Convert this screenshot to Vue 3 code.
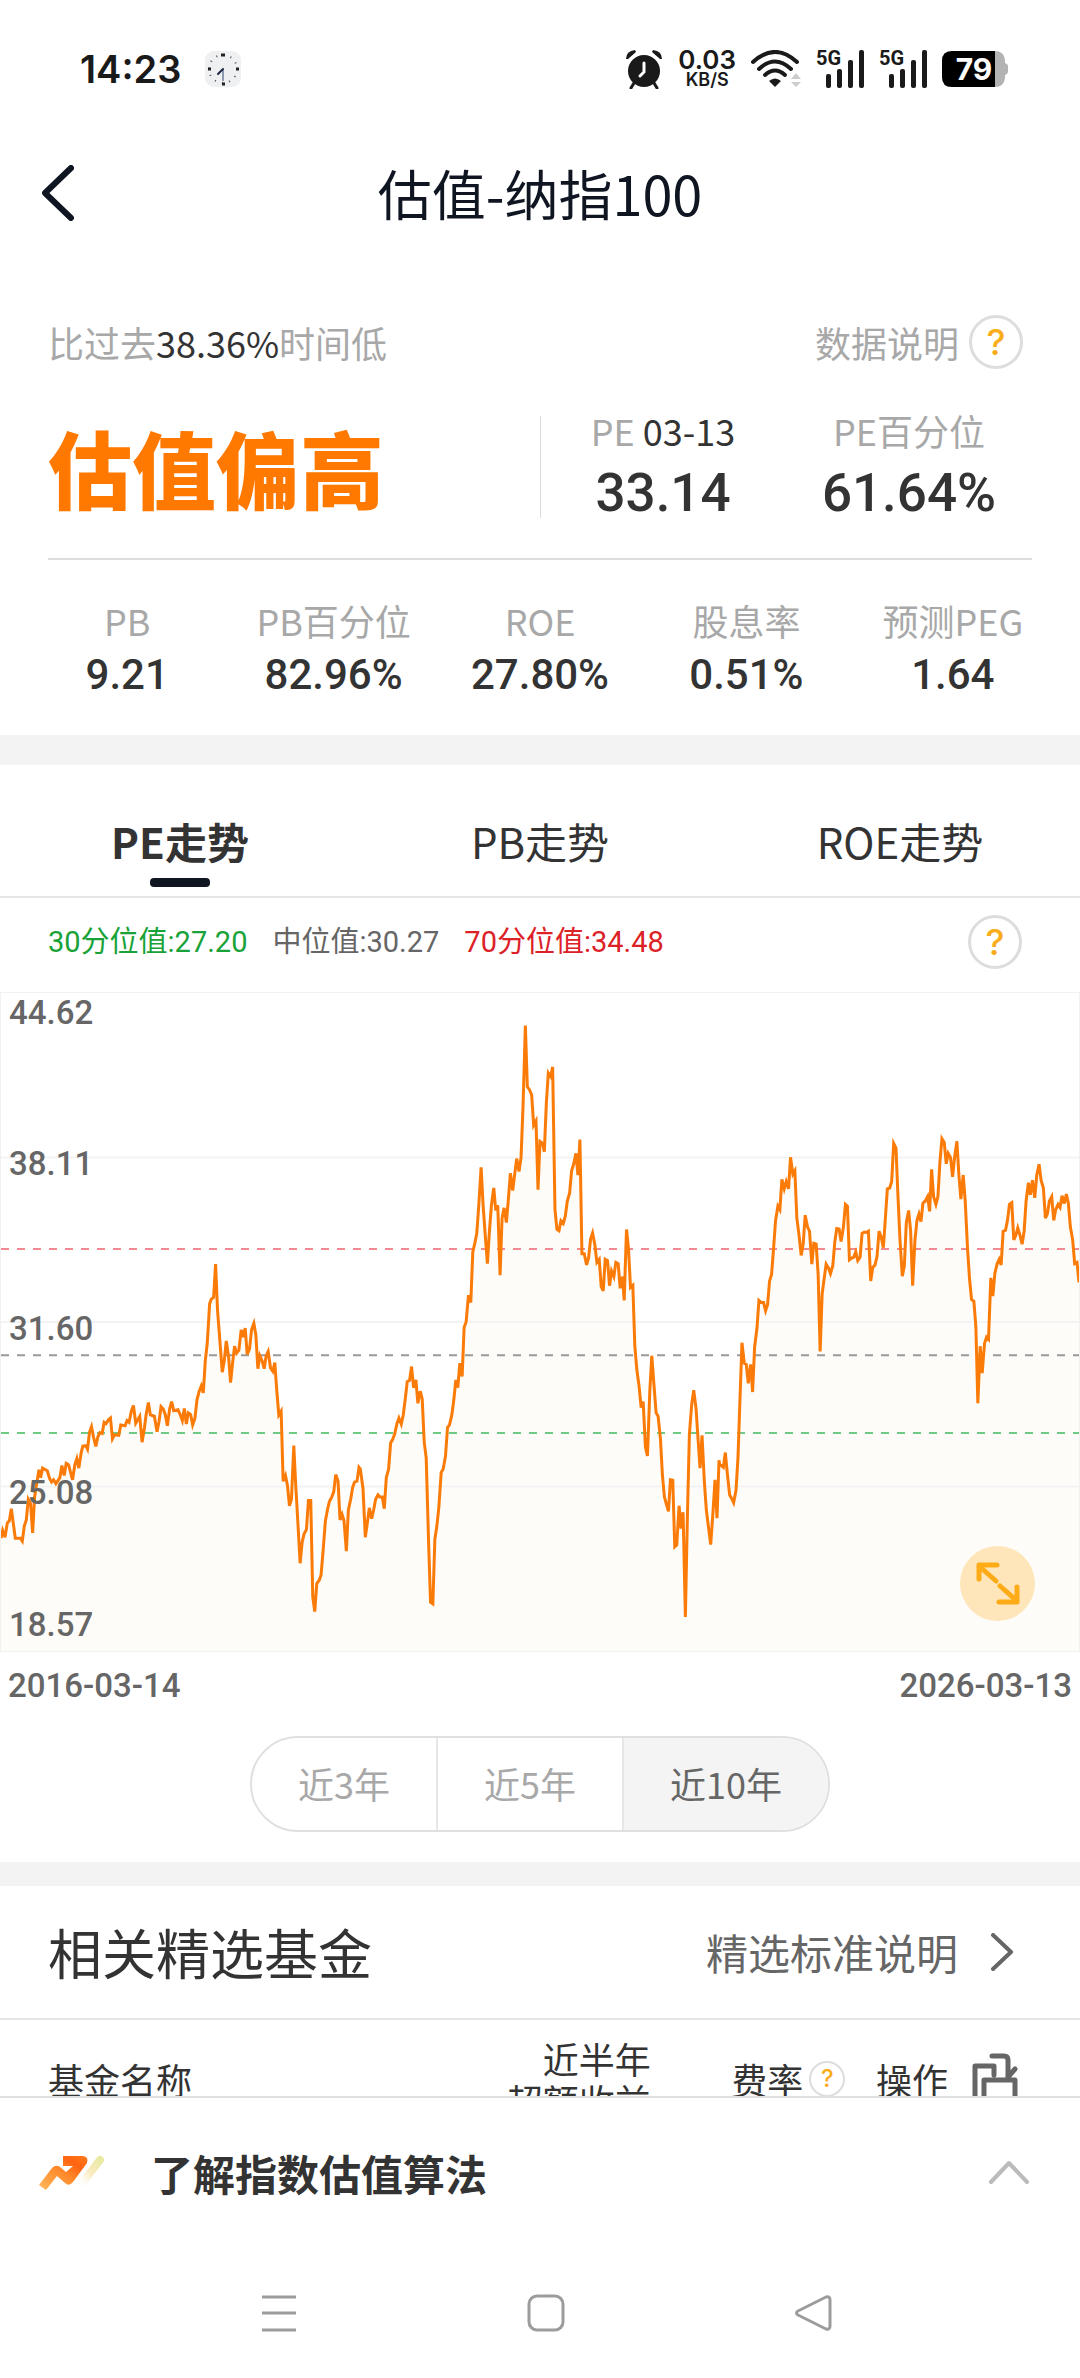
<script setup>
import { computed, ref } from 'vue'

const metrics = [
  { label: 'PB', value: '9.21' },
  { label: 'PB百分位', value: '82.96%' },
  { label: 'ROE', value: '27.80%' },
  { label: '股息率', value: '0.51%' },
  { label: '预测PEG', value: '1.64' }
]
const tabs = ['PE走势', 'PB走势', 'ROE走势']
const ranges = ['近3年', '近5年', '近10年']
const activeTab = ref('PE走势')
const activeRange = ref('近10年')

const axisMax = 44.62
const axisMin = 18.57
const gridLines = [0.25, 0.5, 0.75]
const axisLabels = [
  { text: '44.62', top: 3 },
  { text: '38.11', top: 26 },
  { text: '31.60', top: 51 },
  { text: '25.08', top: 76 },
  { text: '18.57', top: 96 }
]
const percentiles = [
  { name: '30分位值', value: '27.20', type: 'low' },
  { name: '中位值', value: '30.27', type: 'mid' },
  { name: '70分位值', value: '34.48', type: 'high' }
]

// plot area in chart units, the curve is kept in three blocks of equal width
const plot = { width: 3240, height: 1522, top: 29 }
const blocks = [
  '0,1290 5,1272 12,1288 19,1255 25,1250 31,1222 43,1290 58,1290 64,1297 70,1262 76,1248 82,1200 89,1210 95,1278 101,1195 108,1160 114,1132 119,1150 125,1128 139,1134 146,1152 152,1160 158,1155 165,1164 177,1150 183,1122 190,1145 196,1117 203,1120 215,1155 222,1120 228,1106 234,1128 241,1092 246,1077 255,1076 260,1084 266,1045 272,1032 278,1056 285,1078 291,1056 297,1046 304,1048 310,1022 316,1025 323,1016 329,1012 335,1060 341,1051 354,1052 360,1028 373,1030 379,1018 385,1022 392,995 398,983 405,1024 417,1008 424,1068 431,1035 436,1005 443,976 449,1005 461,1008 469,1044 475,1020 481,986 488,992 494,1005 500,1030 507,990 513,974 519,995 532,993 538,1003 545,1018 551,990 557,1026 563,1000 570,1004 576,1028 583,1012 589,970 595,952 602,938 608,954 614,880 620,838 627,748 632,737 639,733 645,656 651,765 658,835 665,906 671,880 677,834 684,870 690,930 696,885 702,846 708,862 715,855 722,808 728,825 734,804 740,865 747,852 753,808 760,793 766,820 772,898 778,868 785,880 791,898 797,868 803,858 810,896 817,904 823,884 829,950 835,1005 842,996 848,1158 855,1145 861,1168 867,1215 873,1200 880,1076 886,1170 892,1250 899,1348 905,1300 911,1280 918,1270 924,1203 931,1203 937,1425 943,1460 949,1395 956,1388 962,1375 968,1320 975,1250 981,1225 987,1205 994,1195 1000,1183 1006,1143 1013,1158 1019,1248 1025,1235 1031,1250 1038,1320 1044,1225 1051,1200 1057,1172 1063,1160 1070,1158 1076,1126',
  '0,1130 8,1175 15,1288 21,1255 27,1220 34,1245 40,1225 46,1200 53,1190 59,1195 66,1195 72,1222 78,1150 85,1130 91,1070 97,1062 103,1050 110,1025 116,1012 123,1026 129,1005 135,968 141,928 148,925 154,893 160,942 167,924 173,978 180,950 186,968 192,1068 198,1105 205,1295 211,1438 218,1442 224,1292 230,1262 236,1218 243,1138 249,1130 256,1100 262,1034 268,1028 275,1005 281,970 287,924 293,942 299,885 306,916 312,802 318,790 325,728 332,745 338,628 344,608 350,585 356,520 363,432 369,520 376,595 382,655 388,580 394,520 401,480 407,532 413,520 420,682 426,550 432,526 439,560 445,505 451,446 458,486 464,448 470,412 477,442 483,410 489,290 496,104 502,246 508,252 515,265 521,335 528,325 534,484 540,372 547,376 553,396 559,285 565,214 572,222 578,200 585,530 591,576 597,579 603,556 610,562 616,545 622,510 629,492 635,440 641,425 648,400 654,450 660,368 666,632 673,632 680,658 686,642 692,598 698,584 705,612 711,652 718,645 724,708 730,718 736,645 743,648 749,706 755,672 762,685 768,652 775,655 781,712 788,685 793,740 800,576 806,620 812,710 819,705 825,845 831,900 838,940 844,988 850,974 857,1080 863,1100 870,950 876,868 882,930 889,1000 895,1008 902,1060 908,1145 914,1195 920,1212 926,1228 932,1155 939,1156 945,1310 951,1306 958,1215 964,1268 970,1230 977,1472 983,1240 989,1050 996,980 1002,948 1009,990 1015,1060 1021,1128 1027,1052 1034,1160 1040,1225 1047,1268 1053,1305 1059,1240 1066,1155 1072,1244 1078,1110',
  '0,1120 5,1122 11,1126 17,1092 23,1140 30,1190 36,1198 42,1208 49,1180 55,1105 61,970 67,838 74,885 80,888 86,932 93,888 99,952 105,848 112,805 118,740 125,745 132,745 138,764 144,750 150,695 156,680 162,620 168,555 175,522 181,530 187,460 194,482 200,465 207,482 213,409 220,448 226,440 232,550 239,592 245,636 251,610 257,543 264,570 270,580 277,656 283,608 290,610 296,680 302,858 308,725 314,690 320,656 327,665 333,678 340,660 346,605 352,574 359,575 365,604 372,570 378,518 384,522 390,646 397,642 403,640 409,628 415,648 422,640 428,585 435,582 441,583 447,580 454,695 460,664 467,658 473,638 479,580 486,595 492,618 498,550 504,482 511,480 517,465 523,377 530,388 536,500 542,600 549,684 555,660 561,560 568,532 574,580 580,706 587,600 593,555 599,540 605,558 611,515 618,510 625,500 631,534 637,437 643,500 650,518 656,500 662,420 668,366 675,375 681,424 687,400 694,410 700,454 706,410 713,372 719,450 725,506 732,450 738,510 745,620 751,690 757,738 764,742 770,800 776,978 783,846 789,908 796,840 802,825 808,830 815,688 821,730 827,678 834,655 840,645 846,658 852,580 859,578 865,555 871,518 878,514 884,600 890,590 896,572 903,590 909,610 915,580 921,510 928,468 934,496 940,462 947,503 953,450 960,425 966,462 973,480 979,550 985,540 991,510 998,500 1004,555 1010,530 1017,518 1023,525 1029,498 1036,516 1042,494 1048,515 1054,570 1061,600 1067,655 1074,652 1080,698'
]

const curve = computed(() =>
  blocks
    .flatMap((block, index) =>
      block.split(' ').map((pair) => {
        const [x, y] = pair.split(',').map(Number)
        return `${x + index * 1080},${y - plot.top}`
      })
    )
    .join(' ')
)
const area = computed(() => `0,${plot.height} ${curve.value} ${plot.width},${plot.height}`)

function valueToY(value) {
  return Math.round(((axisMax - value) / (axisMax - axisMin)) * plot.height)
}
</script>

<template>
  <div class="page">
    <div class="status">
      <div class="status-side">
        <span class="time">14:23</span>
        <svg class="clock-app" viewBox="0 0 36 36" aria-hidden="true">
          <rect width="36" height="36" rx="9" fill="#eff0f2" />
          <circle
            cx="18"
            cy="18"
            r="14"
            fill="none"
            stroke="#555"
            stroke-width="2"
            stroke-dasharray="1 6.33"
          />
          <path d="M16 4h4M3 18h3M31 18h3M17 33h3" stroke="#222" stroke-width="3" />
          <path d="M18 18v12" stroke="#8d9bb0" stroke-width="2" />
          <path d="M18 18l-5 5" stroke="#1c2740" stroke-width="2" stroke-linecap="round" />
        </svg>
      </div>
      <div class="status-side status-right">
        <svg class="alarm" viewBox="0 0 38 40" aria-hidden="true">
          <path d="M1 10Q1 2 10 1l1 2L3 10zM37 10Q37 2 28 1l-1 2 8 7z" fill="#1a1a1a" />
          <circle cx="19" cy="22" r="16" fill="#1a1a1a" />
          <path d="M9 34l-3 5M29 34l3 5" stroke="#1a1a1a" stroke-width="3" stroke-linecap="round" />
          <path
            d="M19 14v9l-4 4"
            fill="none"
            stroke="#fff"
            stroke-width="3"
            stroke-linecap="round"
          />
        </svg>
        <div class="speed">
          <span class="speed-value">0.03</span>
          <span class="speed-unit">KB/S</span>
        </div>
        <svg class="wifi" viewBox="0 0 50 38" aria-hidden="true">
          <g fill="none" stroke="#1a1a1a" stroke-width="4" stroke-linecap="round">
            <path d="M2 12Q24-8 46 12" />
            <path d="M8 19Q24 4 40 19" />
            <path d="M14 25Q24 16 34 25" />
          </g>
          <path d="M24 37l-6-6q6-5 12 0z" fill="#1a1a1a" />
          <path d="M40 29l5-6 5 6zM40 32h10l-5 5z" fill="#ccc" />
        </svg>
        <div v-for="sim in 2" :key="sim" class="signal">
          <span class="signal-type">5G</span>
          <svg viewBox="0 0 48 38" aria-hidden="true">
            <g fill="#1a1a1a">
              <rect x="10" y="24" width="5" height="14" rx="2" />
              <rect x="21" y="19" width="5" height="19" rx="2" />
              <rect x="32" y="10" width="5" height="28" rx="2" />
              <rect x="43" y="0" width="5" height="38" rx="2" />
            </g>
          </svg>
        </div>
        <div class="battery">
          <svg viewBox="0 0 66 36" aria-hidden="true">
            <path
              d="M10 0h43q9 0 10 9v3q3 1 3 3v6q0 2-3 3v3q-1 9-10 9H10Q0 36 0 26V10Q0 0 10 0z"
              fill="#b3b3b3"
            />
            <path d="M10 0h43v36H10Q0 36 0 26V10Q0 0 10 0z" fill="#000" />
          </svg>
          <span class="battery-level">79</span>
        </div>
      </div>
    </div>

    <header class="header">
      <button class="back" type="button" aria-label="返回">
        <svg viewBox="0 0 32 56">
          <path d="M29 3L3 28l26 25" />
        </svg>
      </button>
      <h1>估值-纳指100</h1>
    </header>

    <main class="content">
      <section class="summary">
        <div class="summary-top">
          <p>比过去<b>38.36%</b>时间低</p>
          <div class="explain">
            <span>数据说明</span>
            <button class="help" type="button" aria-label="数据说明">?</button>
          </div>
        </div>
        <div class="summary-main">
          <strong class="verdict">估值偏高</strong>
          <div class="pe-group">
            <div class="pe">
              <span class="label">PE <b>03-13</b></span>
              <span class="pe-value">33.14</span>
            </div>
            <div class="pe">
              <span class="label">PE百分位</span>
              <span class="pe-value">61.64%</span>
            </div>
          </div>
        </div>
        <div class="metrics">
          <div v-for="item in metrics" :key="item.label" class="metric">
            <span class="label">{{ item.label }}</span>
            <span class="metric-value">{{ item.value }}</span>
          </div>
        </div>
      </section>

      <section class="trend">
        <nav class="tabs">
          <button
            v-for="tab in tabs"
            :key="tab"
            type="button"
            :class="{ active: tab === activeTab }"
            @click="activeTab = tab"
          >
            {{ tab }}
          </button>
        </nav>
        <div class="legend">
          <span v-for="item in percentiles" :key="item.name" :class="item.type"
            >{{ item.name }}:{{ item.value }}</span
          >
          <button class="help" type="button" aria-label="分位值说明">?</button>
        </div>
        <div class="chart">
          <svg
            class="plot"
            :viewBox="`0 0 ${plot.width} ${plot.height}`"
            preserveAspectRatio="none"
            aria-hidden="true"
          >
            <polygon class="area" :points="area" />
            <line
              v-for="line in gridLines"
              :key="line"
              class="grid"
              x1="0"
              :x2="plot.width"
              :y1="line * plot.height"
              :y2="line * plot.height"
            />
            <line
              v-for="item in percentiles"
              :key="item.name"
              class="dash"
              :class="item.type"
              x1="0"
              :x2="plot.width"
              :y1="valueToY(item.value)"
              :y2="valueToY(item.value)"
            />
            <polyline class="curve" :points="curve" />
          </svg>
          <span
            v-for="item in axisLabels"
            :key="item.text"
            class="axis-label"
            :style="{ top: item.top + '%' }"
            >{{ item.text }}</span
          >
          <button class="expand" type="button" aria-label="全屏">
            <svg viewBox="0 0 44 44">
              <path d="M20 19L3 4M3 17V3h18M24 24l17 15M41 25v15H23" />
            </svg>
          </button>
        </div>
        <div class="dates">
          <span>2016-03-14</span>
          <span>2026-03-13</span>
        </div>
        <div class="ranges">
          <button
            v-for="range in ranges"
            :key="range"
            type="button"
            :class="{ active: range === activeRange }"
            @click="activeRange = range"
          >
            {{ range }}
          </button>
        </div>
      </section>

      <section class="funds">
        <div class="funds-head">
          <h2>相关精选基金</h2>
          <a href="#"
            >精选标准说明
            <svg viewBox="0 0 24 38" aria-hidden="true">
              <path d="M3 2l18 17L3 36" />
            </svg>
          </a>
        </div>
        <table>
          <thead>
            <tr>
              <th class="col-name">基金名称</th>
              <th class="col-gain">近半年<br />超额收益</th>
              <th class="col-fee">
                <div class="cell">
                  费率<button class="help small" type="button" aria-label="费率说明">?</button>
                </div>
              </th>
              <th class="col-action">
                <div class="cell">
                  操作
                  <svg viewBox="0 0 46 54" aria-hidden="true">
                    <path d="M11 50H3V14h19v9M12 50V28h31v22zM20 4h12q4 0 4 4v16M43 17l-7 8" />
                  </svg>
                </div>
              </th>
            </tr>
          </thead>
        </table>
      </section>
    </main>

    <button class="learn" type="button">
      <svg class="learn-logo" viewBox="0 0 66 36" aria-hidden="true">
        <defs>
          <linearGradient id="arrow" x1="0" y1="1" x2="1" y2="0">
            <stop offset="0" stop-color="#ffb95e" />
            <stop offset="0.5" stop-color="#ff8a2b" />
            <stop offset="0.75" stop-color="#ff6410" />
            <stop offset="1" stop-color="#ff7a1c" />
          </linearGradient>
          <linearGradient id="tail" x1="1" y1="0" x2="0" y2="1">
            <stop offset="0" stop-color="#e9eaa4" />
            <stop offset="0.5" stop-color="#fbecc4" />
            <stop offset="1" stop-color="#fff" stop-opacity="0" />
          </linearGradient>
        </defs>
        <path d="M40 32L61 5" stroke="url(#tail)" stroke-width="8" stroke-linecap="round" />
        <path
          d="M0 30L13 13q4-4 8-1l6 5 7-6H24V1h20q6 1 4 7L34 27q-4 5-8 1l-8-7L7 35z"
          fill="url(#arrow)"
        />
      </svg>
      <span>了解指数估值算法</span>
      <svg class="learn-arrow" viewBox="0 0 42 26" aria-hidden="true">
        <path d="M3 22L21 3l18 19" />
      </svg>
    </button>

    <nav class="system">
      <button type="button" aria-label="最近任务">
        <svg viewBox="0 0 38 38">
          <path d="M2 3h34M2 19h34M2 36h34" />
        </svg>
      </button>
      <button type="button" aria-label="主屏幕">
        <svg viewBox="0 0 38 38">
          <rect x="2" y="2" width="34" height="34" rx="8" />
        </svg>
      </button>
      <button type="button" aria-label="返回">
        <svg viewBox="0 0 38 38">
          <path d="M4 17L32 3q4-1 4 3v26q0 4-4 3L4 21q-3-2 0-4z" />
        </svg>
      </button>
    </nav>
  </div>
</template>

<style>
body {
  margin: 0;
  background: #fff;
}
</style>

<style scoped>
.page {
  display: flex;
  flex-direction: column;
  height: 100vh;
  overflow: hidden;
  color: #333;
  font-family: 'Noto Sans CJK SC', sans-serif;
  font-size: 36px;
  line-height: 44px;
}
button {
  padding: 0;
  border: 0;
  background: none;
  color: inherit;
  font: inherit;
}
h1,
h2,
p {
  margin: 0;
}
svg {
  display: block;
  flex: none;
}
.status {
  display: flex;
  justify-content: space-between;
  align-items: center;
  height: 137px;
  padding: 0 72px 0 80px;
  font-family: Inter, sans-serif;
  color: #1a1a1a;
}
.status-side {
  display: flex;
  align-items: center;
  gap: 24px;
}
.status-right {
  gap: 15px;
}
.time {
  font-size: 38px;
  font-weight: 600;
}
.clock-app {
  width: 36px;
  height: 36px;
}
.alarm {
  width: 38px;
  height: 40px;
}
.speed {
  display: flex;
  flex-direction: column;
  align-items: center;
  font-weight: 600;
}
.speed-value {
  font-size: 26px;
  line-height: 22px;
}
.speed-unit {
  font-size: 18px;
  line-height: 18px;
}
.wifi {
  width: 50px;
  height: 38px;
}
.signal {
  position: relative;
}
.signal svg {
  width: 48px;
  height: 38px;
}
.signal-type {
  position: absolute;
  top: 0;
  left: 0;
  font: 700 20px/16px Roboto, sans-serif;
}
.battery {
  position: relative;
}
.battery svg {
  width: 66px;
  height: 36px;
}
.battery-level {
  position: absolute;
  inset: 0 0 0 -2px;
  color: #fff;
  font-size: 30px;
  font-weight: 700;
  line-height: 36px;
  text-align: center;
}
.header {
  display: grid;
  grid-template-columns: 1fr auto 1fr;
  align-items: center;
  height: 112px;
  padding: 0 42px;
  color: #101522;
}
.header h1 {
  font-size: 54px;
  font-weight: 400;
}
.back {
  justify-self: start;
}
.back svg {
  width: 32px;
  height: 56px;
}
.back path {
  fill: none;
  stroke: #101522;
  stroke-width: 6;
  stroke-linecap: round;
  stroke-linejoin: round;
}
.content {
  flex: 1;
  min-height: 0;
  overflow: hidden;
}
.summary {
  padding-top: 66px;
  border-bottom: 30px solid #f3f3f3;
}
.summary b {
  color: #333;
  font-weight: 400;
}
.summary-top {
  display: flex;
  justify-content: space-between;
  align-items: center;
  padding: 0 57px 0 48px;
  color: #a8a8a8;
}
.explain {
  display: flex;
  align-items: center;
  gap: 10px;
}
.help {
  box-sizing: border-box;
  width: 54px;
  height: 54px;
  border: 3px solid #ddd;
  border-radius: 50%;
  color: #f9ad1c;
  font: 500 36px/48px Inter, sans-serif;
}
.help.small {
  width: 36px;
  height: 36px;
  border-width: 2px;
  font-size: 24px;
  line-height: 32px;
}
.summary-main {
  display: flex;
  align-items: center;
  margin: 0 48px;
  padding: 39px 0 32px;
  border-bottom: 2px solid #ddd;
}
.verdict {
  flex: 1;
  color: #ff7800;
  font-size: 84px;
  font-weight: 900;
  line-height: 100px;
}
.pe-group {
  display: flex;
  flex: 1;
  background: linear-gradient(#ddd, #ddd) left center / 1px 102px no-repeat;
}
.pe,
.metric {
  display: flex;
  flex: 1;
  flex-direction: column;
  align-items: center;
}
.label {
  color: #a8a8a8;
}
.pe-value {
  padding-top: 8px;
  font: 500 53px/66px Roboto, sans-serif;
}
.metrics {
  display: flex;
  padding: 38px 24px 35px;
}
.metric-value {
  padding-top: 8px;
  font: 500 42px/50px Roboto, sans-serif;
}
.trend {
  border-bottom: 24px solid #f3f3f3;
}
.tabs {
  display: flex;
  border-bottom: 2px solid #e6e6e6;
}
.tabs button {
  flex: 1;
  padding: 48px 0 9px;
  font-size: 42px;
  line-height: 56px;
}
.tabs button::after {
  content: '';
  display: block;
  width: 60px;
  height: 9px;
  margin: 9px auto 0;
  border-radius: 4px;
}
.tabs .active {
  font-weight: 700;
}
.tabs .active::after {
  background: #101522;
}
.legend {
  display: flex;
  align-items: center;
  gap: 25px;
  height: 88px;
  padding: 0 58px 6px 48px;
  font: 400 29px/40px Roboto, 'Noto Sans CJK SC', sans-serif;
}
.legend .help {
  margin-left: auto;
}
.legend .low {
  color: #19a238;
}
.legend .mid {
  color: #666;
}
.legend .high {
  color: #dc2127;
}
.chart {
  position: relative;
  box-sizing: border-box;
  border: 1px solid #f1f1f1;
}
.plot {
  width: 100%;
  height: 658px;
}
.plot * {
  fill: none;
  vector-effect: non-scaling-stroke;
}
.plot .area {
  fill: #fefcf8;
}
.plot .grid {
  stroke: #f3f3f3;
  stroke-width: 2;
}
.plot .dash {
  stroke-width: 2;
  stroke-dasharray: 8 8;
}
.plot .low {
  stroke: #6dca84;
}
.plot .mid {
  stroke: #999;
}
.plot .high {
  stroke: #f08a90;
}
.plot .curve {
  stroke: #fb7b08;
  stroke-width: 3;
}
.axis-label {
  position: absolute;
  left: 8px;
  transform: translateY(-50%);
}
.axis-label,
.dates {
  color: #666;
  font: 500 33px/40px Roboto, sans-serif;
}
.expand {
  position: absolute;
  right: 44px;
  bottom: 30px;
  display: flex;
  justify-content: center;
  align-items: center;
  width: 75px;
  height: 75px;
  border-radius: 50%;
  background: #ffe6ba;
}
.expand svg {
  width: 44px;
  height: 44px;
}
.expand path {
  fill: none;
  stroke: #fdab17;
  stroke-width: 5;
  stroke-linecap: round;
  stroke-linejoin: round;
}
.dates {
  display: flex;
  justify-content: space-between;
  padding: 14px 8px 30px;
}
.ranges {
  display: flex;
  width: fit-content;
  margin: 0 auto 30px;
  overflow: hidden;
  border: 2px solid #e0e0e0;
  border-radius: 48px;
}
.ranges button {
  padding: 23px 46px 25px;
  color: #a8a8a8;
}
.ranges button + button {
  border-left: 2px solid #e6e6e6;
}
.ranges .active {
  background: #f4f4f4;
  color: #666;
}
.funds-head {
  display: flex;
  justify-content: space-between;
  align-items: center;
  height: 132px;
  padding: 0 66px 0 48px;
  border-bottom: 2px solid #e6e6e6;
}
.funds-head h2 {
  font-size: 54px;
  font-weight: 400;
}
.funds-head a {
  display: flex;
  align-items: center;
  gap: 32px;
  color: #666;
  font-size: 42px;
  text-decoration: none;
}
.funds-head a svg {
  width: 24px;
  height: 38px;
}
.funds-head path {
  fill: none;
  stroke: #666;
  stroke-width: 4;
  stroke-linecap: round;
  stroke-linejoin: round;
}
table {
  width: 100%;
  border-collapse: collapse;
  table-layout: fixed;
}
th {
  padding: 17px 0;
  font-weight: 400;
  line-height: 42px;
  text-align: right;
}
.col-name {
  padding-left: 48px;
  text-align: left;
}
.col-gain {
  width: 20%;
}
.col-fee {
  width: 18%;
}
.col-action {
  width: 16%;
  padding-right: 62px;
}
.cell {
  display: flex;
  justify-content: flex-end;
  align-items: center;
  gap: 6px;
}
.col-action .cell {
  gap: 24px;
}
.col-action svg {
  width: 46px;
  height: 54px;
}
.col-action path {
  fill: none;
  stroke: #666;
  stroke-width: 5;
  stroke-linecap: round;
  stroke-linejoin: round;
}
.learn {
  display: flex;
  align-items: center;
  height: 152px;
  padding: 0 50px 0 39px;
  border-top: 2px solid #e0e0e0;
  font-size: 42px;
  font-weight: 700;
}
.learn-logo {
  width: 66px;
  height: 36px;
}
.learn span {
  margin: 0 auto 0 46px;
}
.learn-arrow {
  width: 42px;
  height: 26px;
}
.learn-arrow path {
  fill: none;
  stroke: #bbb;
  stroke-width: 4;
  stroke-linecap: round;
  stroke-linejoin: round;
}
.system {
  display: flex;
  justify-content: center;
  align-items: center;
  gap: 229px;
  height: 130px;
  padding-left: 12px;
}
.system svg {
  width: 38px;
  height: 38px;
}
.system svg * {
  fill: none;
  stroke: #9c9c9c;
  stroke-width: 3;
  stroke-linejoin: round;
}
</style>
